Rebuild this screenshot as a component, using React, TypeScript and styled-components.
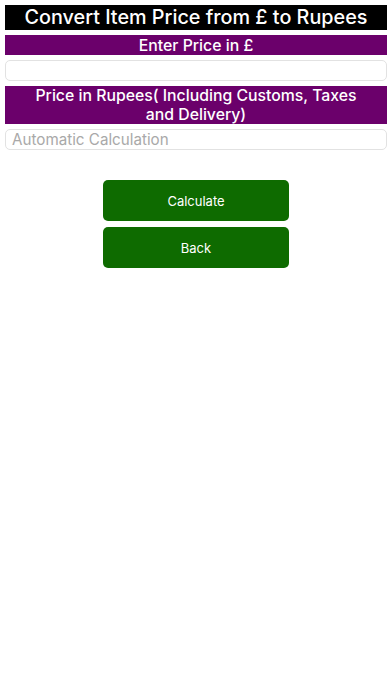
import React, { useState } from "react";
import styled, { createGlobalStyle } from "styled-components";

const GlobalStyle = createGlobalStyle`
  html, body {
    margin: 0;
    padding: 0;
    background: #ffffff;
    font-family: Inter, "Liberation Sans", Arial, sans-serif;
  }
`;

const Page = styled.div`
  display: flex;
  flex-direction: column;
  padding: 5px 5px 0 5px;
  width: 392px;
  box-sizing: border-box;
  min-height: 696px;
`;

const TitleBar = styled.div`
  background: #000000;
  color: #ffffff;
  font-size: 19.8px;
  font-weight: 500;
  line-height: 25px;
  height: 25px;
  text-align: center;
  white-space: nowrap;
  overflow: hidden;
`;

const Header = styled.div<{ $tall?: boolean }>`
  background: #6b006b;
  color: #ffffff;
  font-size: 15.8px;
  font-weight: 500;
  line-height: 19px;
  text-align: center;
  margin-top: 5px;
  display: flex;
  align-items: center;
  justify-content: center;
  box-sizing: border-box;
  height: ${(p) => (p.$tall ? "38px" : "20px")};
`;

const Field = styled.input`
  margin-top: 5px;
  height: 21px;
  border: 1px solid #e2e2e2;
  border-radius: 5px;
  padding: 0 6px;
  font-size: 15.2px;
  font-family: Inter, "Liberation Sans", Arial, sans-serif;
  color: #222;
  box-sizing: border-box;
  outline: none;
  &::placeholder {
    color: #a9a9a9;
  }
`;

const Buttons = styled.div`
  display: flex;
  flex-direction: column;
  align-items: center;
  gap: 6px;
  margin-top: 30px;
`;

const Action = styled.button`
  width: 186px;
  height: 41px;
  background: #0e6b00;
  color: #ffffff;
  border: none;
  border-radius: 5px;
  font-size: 13px;
  font-family: Inter, "Liberation Sans", Arial, sans-serif;
  cursor: pointer;
`;

export default function App() {
  const [price, setPrice] = useState("");
  const [rupees, setRupees] = useState("");

  const calculate = () => {
    const value = parseFloat(price);
    if (!isNaN(value)) setRupees((value * 105 * 1.3).toFixed(2));
  };

  return (
    <>
      <GlobalStyle />
      <Page>
        <TitleBar>Convert Item Price from £ to Rupees</TitleBar>
        <Header>Enter Price in £</Header>
        <Field value={price} onChange={(e) => setPrice(e.target.value)} />
        <Header $tall>
          Price in Rupees( Including Customs, Taxes
          <br />
          and Delivery)
        </Header>
        <Field placeholder="Automatic Calculation" value={rupees} readOnly />
        <Buttons>
          <Action onClick={calculate}>Calculate</Action>
          <Action onClick={() => { setPrice(""); setRupees(""); }}>Back</Action>
        </Buttons>
      </Page>
    </>
  );
}
